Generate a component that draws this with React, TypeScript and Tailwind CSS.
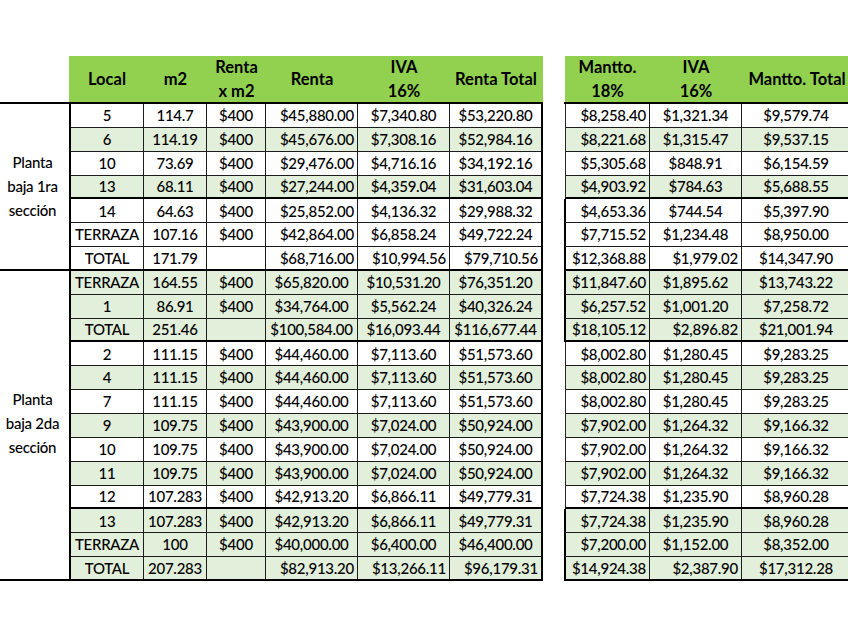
import React from "react";

const data: string[][] = [
  ["5", "114.7", "$400", "$45,880.00", "$7,340.80", "$53,220.80", "$8,258.40", "$1,321.34", "$9,579.74"],
  ["6", "114.19", "$400", "$45,676.00", "$7,308.16", "$52,984.16", "$8,221.68", "$1,315.47", "$9,537.15"],
  ["10", "73.69", "$400", "$29,476.00", "$4,716.16", "$34,192.16", "$5,305.68", "$848.91", "$6,154.59"],
  ["13", "68.11", "$400", "$27,244.00", "$4,359.04", "$31,603.04", "$4,903.92", "$784.63", "$5,688.55"],
  ["14", "64.63", "$400", "$25,852.00", "$4,136.32", "$29,988.32", "$4,653.36", "$744.54", "$5,397.90"],
  ["TERRAZA", "107.16", "$400", "$42,864.00", "$6,858.24", "$49,722.24", "$7,715.52", "$1,234.48", "$8,950.00"],
  ["TOTAL", "171.79", "", "$68,716.00", "$10,994.56", "$79,710.56", "$12,368.88", "$1,979.02", "$14,347.90"],
  ["TERRAZA", "164.55", "$400", "$65,820.00", "$10,531.20", "$76,351.20", "$11,847.60", "$1,895.62", "$13,743.22"],
  ["1", "86.91", "$400", "$34,764.00", "$5,562.24", "$40,326.24", "$6,257.52", "$1,001.20", "$7,258.72"],
  ["TOTAL", "251.46", "", "$100,584.00", "$16,093.44", "$116,677.44", "$18,105.12", "$2,896.82", "$21,001.94"],
  ["2", "111.15", "$400", "$44,460.00", "$7,113.60", "$51,573.60", "$8,002.80", "$1,280.45", "$9,283.25"],
  ["4", "111.15", "$400", "$44,460.00", "$7,113.60", "$51,573.60", "$8,002.80", "$1,280.45", "$9,283.25"],
  ["7", "111.15", "$400", "$44,460.00", "$7,113.60", "$51,573.60", "$8,002.80", "$1,280.45", "$9,283.25"],
  ["9", "109.75", "$400", "$43,900.00", "$7,024.00", "$50,924.00", "$7,902.00", "$1,264.32", "$9,166.32"],
  ["10", "109.75", "$400", "$43,900.00", "$7,024.00", "$50,924.00", "$7,902.00", "$1,264.32", "$9,166.32"],
  ["11", "109.75", "$400", "$43,900.00", "$7,024.00", "$50,924.00", "$7,902.00", "$1,264.32", "$9,166.32"],
  ["12", "107.283", "$400", "$42,913.20", "$6,866.11", "$49,779.31", "$7,724.38", "$1,235.90", "$8,960.28"],
  ["13", "107.283", "$400", "$42,913.20", "$6,866.11", "$49,779.31", "$7,724.38", "$1,235.90", "$8,960.28"],
  ["TERRAZA", "100", "$400", "$40,000.00", "$6,400.00", "$46,400.00", "$7,200.00", "$1,152.00", "$8,352.00"],
  ["TOTAL", "207.283", "", "$82,913.20", "$13,266.11", "$96,179.31", "$14,924.38", "$2,387.90", "$17,312.28"],
];

const green = [false, true, false, true, false, false, false, true, true, true, false, true, false, true, false, true, false, true, true, true];
const thickBottom = [3, 6, 9, 16, 19];
const rightThickLeft = [4, 5, 6, 7, 8, 9, 17, 18, 19];

function Cell({ w, text, right, last }: { w: string; text: string; right?: boolean; last?: boolean }) {
  return (
    <div
      className={
        "flex h-full items-center whitespace-nowrap " +
        w +
        (last ? "" : " border-r border-[#1c1c1c]") +
        (right ? " justify-end pr-[3px]" : " justify-center")
      }
    >
      {text}
    </div>
  );
}

function LeftRow({ r, i }: { r: string[]; i: number }) {
  const thick = thickBottom.includes(i);
  const rentaRight = i <= 6 || i === 19;
  const totRight = i === 6 || i === 19;
  return (
    <div
      className={
        "flex h-[23.85px] " +
        (green[i] ? "bg-[#e2efda]" : "bg-white") +
        (thick ? " border-b-2 border-black" : " border-b border-[#1c1c1c]")
      }
    >
      <Cell w="w-[73px]" text={r[0]} />
      <Cell w="w-[63px]" text={r[1]} />
      <Cell w="w-[59px]" text={r[2]} />
      <Cell w="w-[92px]" text={r[3]} right={rentaRight} />
      <Cell w="w-[92px]" text={r[4]} right={totRight} />
      <Cell w="w-[91px]" text={r[5]} right={totRight} last />
    </div>
  );
}

function RightRow({ r, i }: { r: string[]; i: number }) {
  const thick = thickBottom.includes(i);
  const tl = rightThickLeft.includes(i);
  const ivaRight = i === 6 || i === 9 || i === 19;
  return (
    <div
      className={
        "flex h-[23.85px] " +
        (green[i] ? "bg-[#e2efda]" : "bg-white") +
        (thick ? " border-b-2 border-b-black" : " border-b border-b-[#1c1c1c]") +
        (tl ? " border-l-2 border-l-black" : " ml-px border-l border-l-[#2a2a2a]")
      }
    >
      <Cell w="w-[84px]" text={r[6]} right />
      <Cell w="w-[92px]" text={r[7]} right={ivaRight} />
      <Cell w="w-[108px]" text={r[8]} last />
    </div>
  );
}

function H({ w, lines }: { w: string; lines: string[] }) {
  return (
    <div className={"flex h-full flex-col items-center justify-center leading-[24px] " + w}>
      {lines.map((l) => (
        <span key={l} className="whitespace-nowrap">
          {l}
        </span>
      ))}
    </div>
  );
}

export default function App() {
  return (
    <div className="flex h-[636px] w-[848px] items-start overflow-hidden bg-white pt-[56px] font-['Lato',sans-serif] text-[15px] font-medium tracking-[-0.25px] text-black">
      {/* label column */}
      <div className="flex w-[69px] shrink-0 flex-col">
        <div className="h-[46px]" />
        <div className="flex h-[168.95px] flex-col items-center justify-center border-y-2 border-black pr-[4px] leading-[24px]">
          <span>Planta</span>
          <span>baja 1ra</span>
          <span>sección</span>
        </div>
        <div className="flex h-[310.05px] flex-col items-center justify-center border-b-2 border-black pb-[4px] pr-[4px] leading-[24px]">
          <span>Planta</span>
          <span>baja 2da</span>
          <span>sección</span>
        </div>
      </div>

      {/* left table */}
      <div className="flex w-[474px] shrink-0 flex-col">
        <div className="flex h-[46px] bg-[#92d050] pl-px pr-px text-[16.5px] font-bold tracking-normal text-black">
          <H w="w-[74px]" lines={["Local"]} />
          <H w="w-[63px]" lines={["m2"]} />
          <H w="w-[59px]" lines={["Renta", "x m2"]} />
          <H w="w-[92px]" lines={["Renta"]} />
          <H w="w-[92px]" lines={["IVA", "16%"]} />
          <H w="w-[92px]" lines={["Renta Total"]} />
        </div>
        <div className="flex flex-col border-x-2 border-t-2 border-black">
          {data.map((r, i) => (
            <LeftRow key={i} r={r} i={i} />
          ))}
        </div>
      </div>

      <div className="w-[21px] shrink-0" />

      {/* right table */}
      <div className="flex w-[290px] shrink-0 flex-col">
        <div className="ml-px flex h-[46px] bg-[#92d050] text-[16.5px] font-bold tracking-normal text-black">
          <H w="w-[85px]" lines={["Mantto.", "18%"]} />
          <H w="w-[92px]" lines={["IVA", "16%"]} />
          <H w="w-[110px]" lines={["Mantto. Total"]} />
        </div>
        <div className="flex flex-col border-t-2 border-black">
          {data.map((r, i) => (
            <RightRow key={i} r={r} i={i} />
          ))}
        </div>
      </div>
    </div>
  );
}
